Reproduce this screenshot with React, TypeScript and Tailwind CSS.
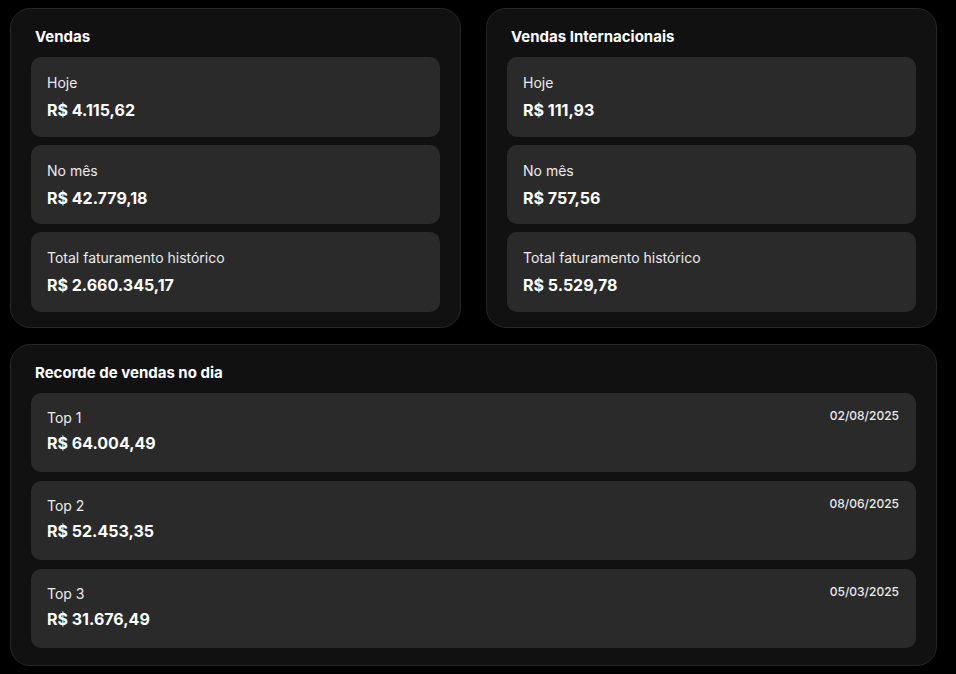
import React from "react";

const vendas = [
  { label: "Hoje", value: "R$ 4.115,62" },
  { label: "No mês", value: "R$ 42.779,18" },
  { label: "Total faturamento histórico", value: "R$ 2.660.345,17" },
];

const internacionais = [
  { label: "Hoje", value: "R$ 111,93" },
  { label: "No mês", value: "R$ 757,56" },
  { label: "Total faturamento histórico", value: "R$ 5.529,78" },
];

const recordes = [
  { label: "Top 1", value: "R$ 64.004,49", date: "02/08/2025" },
  { label: "Top 2", value: "R$ 52.453,35", date: "08/06/2025" },
  { label: "Top 3", value: "R$ 31.676,49", date: "05/03/2025" },
];

function Panel({ title, children }: { title: string; children: React.ReactNode }) {
  return (
    <div className="rounded-[20px] border border-[#262626] bg-[#111111] px-5 pt-[17px] pb-[15px]">
      <h2 className="ml-1 text-[15px] leading-[22px] font-bold text-white">{title}</h2>
      <div className="mt-[9px] flex flex-col gap-2">{children}</div>
    </div>
  );
}

function StatCard({ label, value }: { label: string; value: string }) {
  return (
    <div className="h-[79.5px] rounded-[10px] bg-[#2a2a2a] px-4 pt-4">
      <p className="text-[14px] leading-5 text-[#ececec]">{label}</p>
      <p className="mt-[5px] text-[16px] leading-6 font-bold text-white">{value}</p>
    </div>
  );
}

export default function App() {
  return (
    <div
      className="min-h-screen bg-black pt-2 pl-[10px]"
      style={{ fontFamily: "Inter, 'Noto Sans', sans-serif" }}
    >
      <div className="flex w-[927px] flex-col gap-4">
        <div className="grid grid-cols-2 gap-[25px]">
          <Panel title="Vendas">
            {vendas.map((v) => (
              <StatCard key={v.label} {...v} />
            ))}
          </Panel>
          <Panel title="Vendas Internacionais">
            {internacionais.map((v) => (
              <StatCard key={v.label} {...v} />
            ))}
          </Panel>
        </div>
        <div className="rounded-[20px] border border-[#262626] bg-[#111111] px-5 pt-[17px] pb-[17px]">
          <h2 className="ml-1 text-[15px] leading-[22px] font-bold text-white">
            Recorde de vendas no dia
          </h2>
          <div className="mt-[9px] flex flex-col gap-[8.5px]">
            {recordes.map((r) => (
              <div
                key={r.label}
                className="flex h-[79.5px] justify-between rounded-[10px] bg-[#2a2a2a] pt-[15px] pr-[17px] pl-4"
              >
                <div>
                  <p className="text-[14px] leading-5 text-[#ececec]">{r.label}</p>
                  <p className="mt-[3px] text-[16px] leading-6 font-bold text-white">{r.value}</p>
                </div>
                <span className="text-[12px] leading-4 font-medium text-[#ececec]">{r.date}</span>
              </div>
            ))}
          </div>
        </div>
      </div>
    </div>
  );
}
